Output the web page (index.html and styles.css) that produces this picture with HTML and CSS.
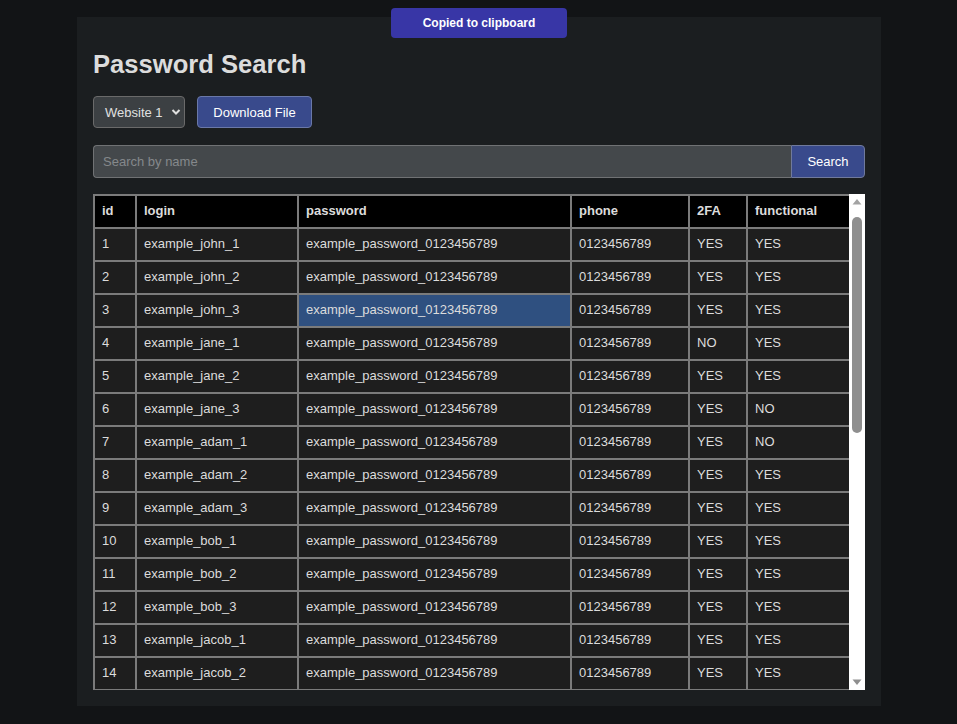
FILE: index.html
```html
<!DOCTYPE html>
<html lang="en">
<head>
<meta charset="utf-8">
<title>Password Search</title>
<link rel="stylesheet" href="styles.css">
</head>
<body>
<div class="toast">Copied to clipboard</div>
<main class="panel">
  <h1 class="title">Password Search</h1>
  <div class="controls">
    <div class="select-wrap">
      <span class="select-label">Website 1</span>
      <svg class="chev" width="10" height="8" viewBox="0 0 10 8"><path d="M1.5 2 L5 5.5 L8.5 2" fill="none" stroke="#e0e0e0" stroke-width="2"/></svg>
    </div>
    <button class="btn download">Download File</button>
  </div>
  <div class="search">
    <input class="search-input" type="text" placeholder="Search by name">
    <button class="btn search-btn">Search</button>
  </div>
  <div class="table-wrap">
    <div class="viewport">
    <table class="grid">
      <thead>
        <tr><th class="c-id">id</th><th class="c-login">login</th><th class="c-pass">password</th><th class="c-phone">phone</th><th class="c-2fa">2FA</th><th class="c-func">functional</th></tr>
      </thead>
      <tbody>
        <tr><td>1</td><td>example_john_1</td><td>example_password_0123456789</td><td>0123456789</td><td>YES</td><td>YES</td></tr>
        <tr><td>2</td><td>example_john_2</td><td>example_password_0123456789</td><td>0123456789</td><td>YES</td><td>YES</td></tr>
        <tr><td>3</td><td>example_john_3</td><td class="selected">example_password_0123456789</td><td>0123456789</td><td>YES</td><td>YES</td></tr>
        <tr><td>4</td><td>example_jane_1</td><td>example_password_0123456789</td><td>0123456789</td><td>NO</td><td>YES</td></tr>
        <tr><td>5</td><td>example_jane_2</td><td>example_password_0123456789</td><td>0123456789</td><td>YES</td><td>YES</td></tr>
        <tr><td>6</td><td>example_jane_3</td><td>example_password_0123456789</td><td>0123456789</td><td>YES</td><td>NO</td></tr>
        <tr><td>7</td><td>example_adam_1</td><td>example_password_0123456789</td><td>0123456789</td><td>YES</td><td>NO</td></tr>
        <tr><td>8</td><td>example_adam_2</td><td>example_password_0123456789</td><td>0123456789</td><td>YES</td><td>YES</td></tr>
        <tr><td>9</td><td>example_adam_3</td><td>example_password_0123456789</td><td>0123456789</td><td>YES</td><td>YES</td></tr>
        <tr><td>10</td><td>example_bob_1</td><td>example_password_0123456789</td><td>0123456789</td><td>YES</td><td>YES</td></tr>
        <tr><td>11</td><td>example_bob_2</td><td>example_password_0123456789</td><td>0123456789</td><td>YES</td><td>YES</td></tr>
        <tr><td>12</td><td>example_bob_3</td><td>example_password_0123456789</td><td>0123456789</td><td>YES</td><td>YES</td></tr>
        <tr><td>13</td><td>example_jacob_1</td><td>example_password_0123456789</td><td>0123456789</td><td>YES</td><td>YES</td></tr>
        <tr><td>14</td><td>example_jacob_2</td><td>example_password_0123456789</td><td>0123456789</td><td>YES</td><td>YES</td></tr>
      </tbody>
    </table>
    </div>
    <div class="scrollbar">
      <div class="sb-btn">
        <svg width="10" height="8" viewBox="0 0 10 8"><path d="M5 1 L9.5 6.5 L0.5 6.5 Z" fill="#a3a3a3"/></svg>
      </div>
      <div class="sb-track"><div class="sb-thumb"></div></div>
      <div class="sb-btn">
        <svg width="10" height="8" viewBox="0 0 10 8"><path d="M0.5 1.5 L9.5 1.5 L5 7 Z" fill="#8f8f8f"/></svg>
      </div>
    </div>
  </div>
</main>
</body>
</html>
```
FILE: styles.css
```css
html, body {
  margin: 0;
  padding: 0;
}
body {
  background: #121416;
  font-family: "Liberation Sans", Arial, sans-serif;
  color: #dcdcdc;
  min-height: 724px;
}
.toast {
  position: absolute;
  left: 391px;
  top: 8px;
  width: 176px;
  height: 30px;
  background: #3836a6;
  color: #ffffff;
  border-radius: 4px;
  font-size: 12px;
  font-weight: bold;
  display: flex;
  align-items: center;
  justify-content: center;
  z-index: 5;
}
.panel {
  width: 772px;
  margin: 17px 0 0 77px;
  padding: 16px;
  background: #1b1e20;
}
.title {
  margin: 16px 0 17px;
  font-size: 25.6px;
  line-height: 30px;
  font-weight: bold;
  color: #dcdcdc;
}
.controls {
  display: flex;
  gap: 12px;
  height: 32px;
}
.select-wrap {
  width: 92px;
  box-sizing: border-box;
  height: 32px;
  background: #3c4043;
  border: 1px solid #6a6a6a;
  border-radius: 4px;
  display: flex;
  align-items: center;
  justify-content: space-between;
  padding: 0 3px 0 11px;
  font-size: 13px;
  color: #e0e0e0;
}
.btn {
  font-family: "Liberation Sans", Arial, sans-serif;
  font-size: 13px;
  color: #ffffff;
  background: #394a8c;
  border: 1px solid #6a78a8;
  border-radius: 4px;
  cursor: pointer;
}
.download {
  width: 115px;
  height: 32px;
  padding: 0;
}
.search {
  display: flex;
  margin-top: 17px;
  height: 33px;
}
.search-input {
  flex: 1;
  box-sizing: border-box;
  height: 33px;
  background: #44484b;
  border: 1px solid #707274;
  border-right: none;
  border-radius: 4px 0 0 4px;
  padding: 0 9px;
  font-family: "Liberation Sans", Arial, sans-serif;
  font-size: 13px;
  color: #dcdcdc;
  outline: none;
}
.search-input::placeholder {
  color: #85888b;
}
.search-btn {
  width: 74px;
  height: 33px;
  padding: 0;
  border-radius: 0 4px 4px 0;
  border-color: #707a9c;
}
.table-wrap {
  margin-top: 16px;
  height: 496px;
  display: flex;
  overflow: hidden;
}
.viewport {
  width: 756px;
  overflow: hidden;
}
.scrollbar {
  width: 16px;
  background: #ffffff;
  display: flex;
  flex-direction: column;
}
.sb-btn {
  height: 16px;
  display: flex;
  align-items: center;
  justify-content: center;
}
.sb-track {
  flex: 1;
  padding: 7px 3px 0 3px;
}
.sb-thumb {
  height: 216px;
  background: #8f8f8f;
  border-radius: 5px;
}
.grid {
  border-collapse: collapse;
  width: 756px;
  font-size: 13px;
  table-layout: fixed;
}
.grid th, .grid td {
  border: 2px solid #7b7b7b;
  height: 29px;
  padding: 0 0 2px 7px;
  text-align: left;
  white-space: nowrap;
  color: #dcdcdc;
}
.grid th {
  background: #000000;
  font-weight: bold;
}
.grid td {
  background: #1e1e1e;
}
.grid td.selected {
  background: #2f5080;
}
.c-id { width: 33px; }
.c-login { width: 153px; }
.c-pass { width: 264px; }
.c-phone { width: 109px; }
.c-2fa { width: 49px; }
.c-func { width: 94px; }
```
